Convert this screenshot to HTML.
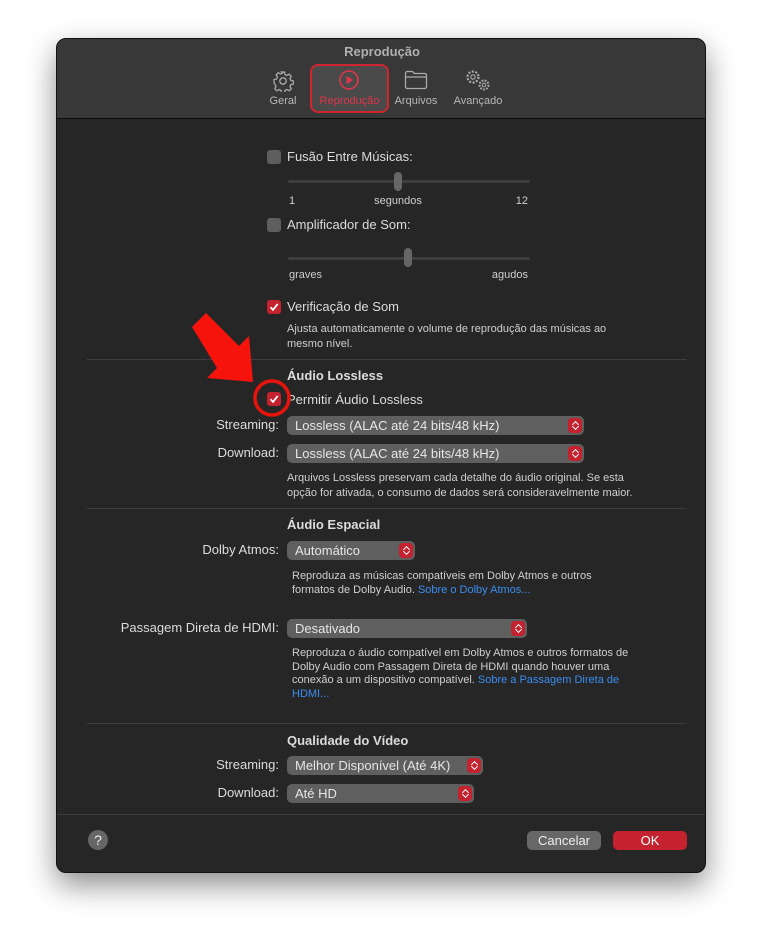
<!DOCTYPE html>
<html><head><meta charset="utf-8"><style>
body{margin:0;width:762px;height:947px;background:#fff;position:relative;overflow:hidden;font-family:"Liberation Sans",sans-serif;}
.win{position:absolute;left:56px;top:38px;width:650px;height:835px;background:#262626;border-radius:10px;box-shadow:0 12px 30px rgba(0,0,0,.45);border:1px solid #111;box-sizing:border-box;overflow:hidden}
.tb{position:absolute;left:0;top:0;width:100%;height:79px;background:#383838;border-bottom:1px solid #0c0c0c}
.t{position:absolute;color:#dcdcdc;font-size:13px;white-space:nowrap;line-height:16px}
.s{position:absolute;color:#cfcfcf;font-size:11px;line-height:14px}
.b{font-weight:bold}
.r{text-align:right}
.cb{position:absolute;width:14px;height:14px;border-radius:3px;background:#5e5e5e}
.cb.on{background:#c4222e}
.pop{position:absolute;height:19px;background:#5f5f5f;border-radius:5px;color:#e6e6e6;font-size:13px;line-height:19px;padding-left:8px;box-sizing:border-box}
.pop i{position:absolute;right:2px;top:2px;width:14px;height:15px;background:#c4222e;border-radius:4px}
.pop i:before,.pop i:after{content:"";position:absolute;left:4.5px;width:4px;height:4px;border-left:1.3px solid #fff;border-top:1.3px solid #fff}
.pop i:before{top:4px;transform:rotate(45deg)}
.pop i:after{top:6px;transform:rotate(225deg)}
.sep{position:absolute;left:30px;width:600px;height:1px;background:#3d3d3d}
.track{position:absolute;height:3px;background:#3e3e3e;border-radius:2px}
.knob{position:absolute;width:8px;height:19px;background:#666;border-radius:4px}
.lk{color:#3b8df0}
.tl{position:absolute;top:56px;font-size:11px;color:#b8b8b8;text-align:center}
</style></head><body>
<div class="win">
<div class="tb">
<div class="t b" style="left:0;width:650px;text-align:center;top:5px;color:#b0b0b0">Reprodução</div>
<div style="position:absolute;left:253px;top:25px;width:79px;height:49px;border:2px solid #d0252f;border-radius:8px;background:#4a4a4a;box-sizing:border-box"></div>
<svg style="position:absolute;left:215px;top:31px" width="22" height="22" viewBox="0 0 22 22" fill="none" stroke="#aaa" stroke-width="1.3"><circle cx="11" cy="11" r="3.2"/><path d="M9.5 2h3l.5 2.5 2 1 2.2-1.3 2.1 2.1-1.3 2.2 1 2 2.5.5v3l-2.5.5-1 2 1.3 2.2-2.1 2.1-2.2-1.3-2 1-.5 2.5h-3l-.5-2.5-2-1-2.2 1.3-2.1-2.1 1.3-2.2-1-2L2 12.5v-3l2.5-.5 1-2-1.3-2.2 2.1-2.1 2.2 1.3 2-1z"/></svg>
<div class="tl" style="left:206px;width:40px">Geral</div>
<svg style="position:absolute;left:281px;top:30px" width="22" height="22" viewBox="0 0 22 22"><circle cx="11" cy="11" r="9" fill="none" stroke="#e0354a" stroke-width="1.6"/><path d="M8.5 6.8v8.4L15.2 11z" fill="#e0354a"/></svg>
<div class="tl" style="left:255px;width:75px;color:#e0354a">Reprodução</div>
<svg style="position:absolute;left:347px;top:31px" width="24" height="20" viewBox="0 0 24 20" fill="none" stroke="#aaa" stroke-width="1.3"><path d="M1.5 3.5q0-2 2-2h5l2 2h10q2 0 2 2v11q0 2-2 2h-17q-2 0-2-2z M1.5 7h21"/></svg>
<div class="tl" style="left:333px;width:52px">Arquivos</div>
<svg style="position:absolute;left:408px;top:30px" width="28" height="24" viewBox="0 0 28 24" fill="none" stroke="#aaa" stroke-width="1.1"><circle cx="8" cy="8" r="2.2"/><circle cx="8" cy="8" r="5.5" stroke-dasharray="2 1.5" stroke-width="2.2"/><circle cx="19" cy="16" r="1.8"/><circle cx="19" cy="16" r="4.5" stroke-dasharray="1.8 1.3" stroke-width="2"/></svg>
<div class="tl" style="left:392px;width:58px">Avançado</div>
</div>

<div class="cb" style="left:210px;top:111px"></div>
<div class="t" style="left:230px;top:110px">Fusão Entre Músicas:</div>
<div class="track" style="left:231px;top:141px;width:242px"></div>
<div class="knob" style="left:337px;top:133px"></div>
<div class="s" style="left:232px;top:155px">1</div>
<div class="s" style="left:310px;top:155px;width:62px;text-align:center">segundos</div>
<div class="s" style="left:440px;top:155px;width:31px;text-align:right">12</div>

<div class="cb" style="left:210px;top:179px"></div>
<div class="t" style="left:230px;top:178px">Amplificador de Som:</div>
<div class="track" style="left:231px;top:218px;width:242px"></div>
<div class="knob" style="left:347px;top:209px"></div>
<div class="s" style="left:232px;top:229px">graves</div>
<div class="s" style="left:420px;top:229px;width:51px;text-align:right">agudos</div>

<div class="cb on" style="left:210px;top:261px"></div>
<svg style="position:absolute;left:210px;top:261px" width="14" height="14"><path d="M3.5 7.2l2.5 2.7 4.7-6" fill="none" stroke="#fff" stroke-width="1.8"/></svg>
<div class="t" style="left:230px;top:260px">Verificação de Som</div>
<div class="s" style="left:230px;top:283px;width:345px;line-height:15px">Ajusta automaticamente o volume de reprodução das músicas ao mesmo nível.</div>
<div class="sep" style="top:320px"></div>

<div class="t b" style="left:230px;top:329px">Áudio Lossless</div>
<div class="cb on" style="left:210px;top:353px"></div>
<svg style="position:absolute;left:210px;top:353px" width="14" height="14"><path d="M3.5 7.2l2.5 2.7 4.7-6" fill="none" stroke="#fff" stroke-width="1.8"/></svg>
<div class="t" style="left:230px;top:353px">Permitir Áudio Lossless</div>
<div class="t r" style="left:60px;width:162px;top:378px">Streaming:</div>
<div class="pop" style="left:230px;top:377px;width:297px">Lossless (ALAC até 24 bits/48 kHz)<i></i></div>
<div class="t r" style="left:60px;width:162px;top:406px">Download:</div>
<div class="pop" style="left:230px;top:405px;width:297px">Lossless (ALAC até 24 bits/48 kHz)<i></i></div>
<div class="s" style="left:230px;top:432px;width:362px;line-height:15px">Arquivos Lossless preservam cada detalhe do áudio original. Se esta opção for ativada, o consumo de dados será consideravelmente maior.</div>
<div class="sep" style="top:469px"></div>

<div class="t b" style="left:230px;top:478px">Áudio Espacial</div>
<div class="t r" style="left:40px;width:182px;top:503px">Dolby Atmos:</div>
<div class="pop" style="left:230px;top:502px;width:128px">Automático<i></i></div>
<div class="s" style="left:235px;top:530px;width:330px">Reproduza as músicas compatíveis em Dolby Atmos e outros formatos de Dolby Audio. <span class="lk">Sobre o Dolby Atmos...</span></div>
<div class="t r" style="left:20px;width:202px;top:581px">Passagem Direta de HDMI:</div>
<div class="pop" style="left:230px;top:580px;width:240px">Desativado<i></i></div>
<div class="s" style="left:235px;top:608px;width:350px;line-height:13.5px">Reproduza o áudio compatível em Dolby Atmos e outros formatos de Dolby Audio com Passagem Direta de HDMI quando houver uma conexão a um dispositivo compatível. <span class="lk">Sobre a Passagem Direta de HDMI...</span></div>
<div class="sep" style="top:684px"></div>

<div class="t b" style="left:230px;top:694px">Qualidade do Vídeo</div>
<div class="t r" style="left:60px;width:162px;top:718px">Streaming:</div>
<div class="pop" style="left:230px;top:717px;width:196px">Melhor Disponível (Até 4K)<i></i></div>
<div class="t r" style="left:60px;width:162px;top:746px">Download:</div>
<div class="pop" style="left:230px;top:745px;width:187px">Até HD<i></i></div>
<div class="sep" style="top:775px;left:0;width:650px"></div>

<div style="position:absolute;left:31px;top:791px;width:20px;height:20px;border-radius:50%;background:#666;color:#eee;font-size:14px;text-align:center;line-height:20px">?</div>
<div style="position:absolute;left:470px;top:792px;width:74px;height:19px;border-radius:5px;background:#676767;color:#eee;font-size:13px;text-align:center;line-height:19px">Cancelar</div>
<div style="position:absolute;left:556px;top:792px;width:74px;height:19px;border-radius:5px;background:#c4222e;color:#fff;font-size:13px;text-align:center;line-height:19px">OK</div>
</div>

<svg style="position:absolute;left:0;top:0" width="762" height="947">
<circle cx="272" cy="398" r="17" fill="none" stroke="#e8140c" stroke-width="3.5"/>
<path d="M192 327 L206 313 L239 346 L249 336 L253 382 L207 378 L217 368 Z" fill="#f5130c"/>
</svg>
</body></html>
